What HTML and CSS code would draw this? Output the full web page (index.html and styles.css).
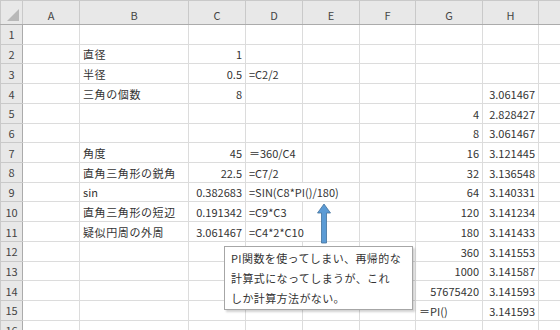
FILE: index.html
```html
<!DOCTYPE html>
<html lang="ja">
  <head>
    <meta charset="UTF-8" />
    <meta name="viewport" content="width=device-width, initial-scale=1.0" />
    <title>円周率の近似</title>
    <link rel="stylesheet" href="styles.css">
  </head>
  <body>
    <div class="sheet-wrap">
      <table class="sheet">
        <colgroup>
          <col class="w-head">
          <col class="w-a">
          <col class="w-b">
          <col class="w-c">
          <col class="w-d">
          <col class="w-e">
          <col class="w-f">
          <col class="w-g">
          <col class="w-h">
          <col class="w-i">
        </colgroup>
        <tr class="col-heads">
          <th class="corner"><span class="corner-mark"></span></th>
          <th>A</th><th>B</th><th>C</th><th>D</th><th>E</th><th>F</th><th>G</th><th>H</th><th></th>
        </tr>
        <tr>
          <th>1</th><td></td><td></td><td></td><td></td><td></td><td></td><td></td><td></td><td></td>
        </tr>
        <tr>
          <th>2</th><td></td><td class="jp">直径</td><td class="num">1</td><td></td><td></td><td></td><td></td><td></td><td></td>
        </tr>
        <tr>
          <th>3</th><td></td><td class="jp">半径</td><td class="num">0.5</td><td>=C2/2</td><td></td><td></td><td></td><td></td><td></td>
        </tr>
        <tr>
          <th>4</th><td></td><td class="jp">三角の個数</td><td class="num">8</td><td></td><td></td><td></td><td></td><td class="num">3.061467</td><td></td>
        </tr>
        <tr>
          <th>5</th><td></td><td></td><td></td><td></td><td></td><td></td><td class="num">4</td><td class="num">2.828427</td><td></td>
        </tr>
        <tr>
          <th>6</th><td></td><td></td><td></td><td></td><td></td><td></td><td class="num">8</td><td class="num">3.061467</td><td></td>
        </tr>
        <tr>
          <th>7</th><td></td><td class="jp">角度</td><td class="num">45</td><td>＝360/C4</td><td></td><td></td><td class="num">16</td><td class="num">3.121445</td><td></td>
        </tr>
        <tr>
          <th>8</th><td></td><td class="jp">直角三角形の鋭角</td><td class="num">22.5</td><td>=C7/2</td><td></td><td></td><td class="num">32</td><td class="num">3.136548</td><td></td>
        </tr>
        <tr>
          <th>9</th><td></td><td>sin</td><td class="num">0.382683</td><td colspan="2">=SIN(C8*PI()/180)</td><td></td><td class="num">64</td><td class="num">3.140331</td><td></td>
        </tr>
        <tr>
          <th>10</th><td></td><td class="jp">直角三角形の短辺</td><td class="num">0.191342</td><td>=C9*C3</td><td></td><td></td><td class="num">120</td><td class="num">3.141234</td><td></td>
        </tr>
        <tr>
          <th>11</th><td></td><td class="jp">疑似円周の外周</td><td class="num">3.061467</td><td colspan="2">=C4*2*C10</td><td></td><td class="num">180</td><td class="num">3.141433</td><td></td>
        </tr>
        <tr>
          <th>12</th><td></td><td></td><td></td><td></td><td></td><td></td><td class="num">360</td><td class="num">3.141553</td><td></td>
        </tr>
        <tr>
          <th>13</th><td></td><td></td><td></td><td></td><td></td><td></td><td class="num">1000</td><td class="num">3.141587</td><td></td>
        </tr>
        <tr>
          <th>14</th><td></td><td></td><td></td><td></td><td></td><td></td><td class="num">57675420</td><td class="num">3.141593</td><td></td>
        </tr>
        <tr>
          <th>15</th><td></td><td></td><td></td><td></td><td></td><td></td><td>＝PI()</td><td class="num">3.141593</td><td></td>
        </tr>
        <tr>
          <th>16</th><td></td><td></td><td></td><td></td><td></td><td></td><td></td><td></td><td></td>
        </tr>
      </table>

      <!-- up arrow pointing at the PI() formula -->
      <svg class="arrow" width="16" height="42" viewBox="0 0 16 42">
        <path d="M8 1 L14.5 10 L10.5 10 L10.5 40 L5.5 40 L5.5 10 L1.5 10 Z" fill="#5b9bd5" stroke="#41719c" stroke-width="0.8" />
      </svg>

      <div class="note">
        PI関数を使ってしまい、再帰的な<br>
        計算式になってしまうが、これ<br>
        しか計算方法がない。
      </div>
    </div>
  </body>
</html>
```

FILE: styles.css
```css
* {
  margin: 0;
  padding: 0;
  box-sizing: border-box;
}
body {
  background: #fff;
  overflow: hidden;
  font-family: "Noto Sans CJK JP", "Noto Sans", sans-serif;
  color: #333;
}
.sheet-wrap {
  position: relative;
  width: 578px;
}
.sheet {
  border-collapse: collapse;
  table-layout: fixed;
  width: 578px;
  font-size: 11px;
}
.w-head { width: 22px; }
.w-a { width: 57px; }
.w-b { width: 109px; }
.w-c { width: 57px; }
.w-d { width: 57px; }
.w-e { width: 57px; }
.w-f { width: 56px; }
.w-g { width: 67px; }
.w-h { width: 56px; }
.w-i { width: 40px; }

.sheet tr {
  height: 19.73px;
}
.sheet td {
  border: 1px solid #dcdcdc;
  padding: 0 3px 1px;
  line-height: 16px;
  vertical-align: bottom;
  white-space: nowrap;
  overflow: hidden;
}
.sheet th {
  background: #e8e8e8;
  color: #444;
  font-weight: normal;
  border: 1px solid #c9c9c9;
  border-right-color: #ababab;
  text-align: center;
  line-height: 16px;
  vertical-align: middle;
  padding: 0;
}
.col-heads {
  height: 24px !important;
}
.col-heads th {
  border-right-color: #c9c9c9;
  border-bottom-color: #ababab;
  vertical-align: bottom;
  padding-bottom: 1px;
}
.corner {
  position: relative;
}
.corner-mark {
  position: absolute;
  right: 3px;
  bottom: 3px;
  width: 0;
  height: 0;
  border-left: 12px solid transparent;
  border-bottom: 12px solid #b8b8b8;
}
.num {
  text-align: right;
}
.jp {
  letter-spacing: 0.6px;
}

/* pointer arrow and comment shape drawn over the cells */
.arrow {
  position: absolute;
  left: 316px;
  top: 203px;
}
.note {
  position: absolute;
  left: 224px;
  top: 246px;
  width: 189px;
  height: 64px;
  background: #fff;
  border: 1px solid #a6a6a6;
  box-shadow: 2px 2px 2px rgba(0, 0, 0, 0.18);
  padding: 1px 6px;
  font-size: 11px;
  line-height: 20px;
  letter-spacing: 0.4px;
  color: #333;
  white-space: nowrap;
}
```
